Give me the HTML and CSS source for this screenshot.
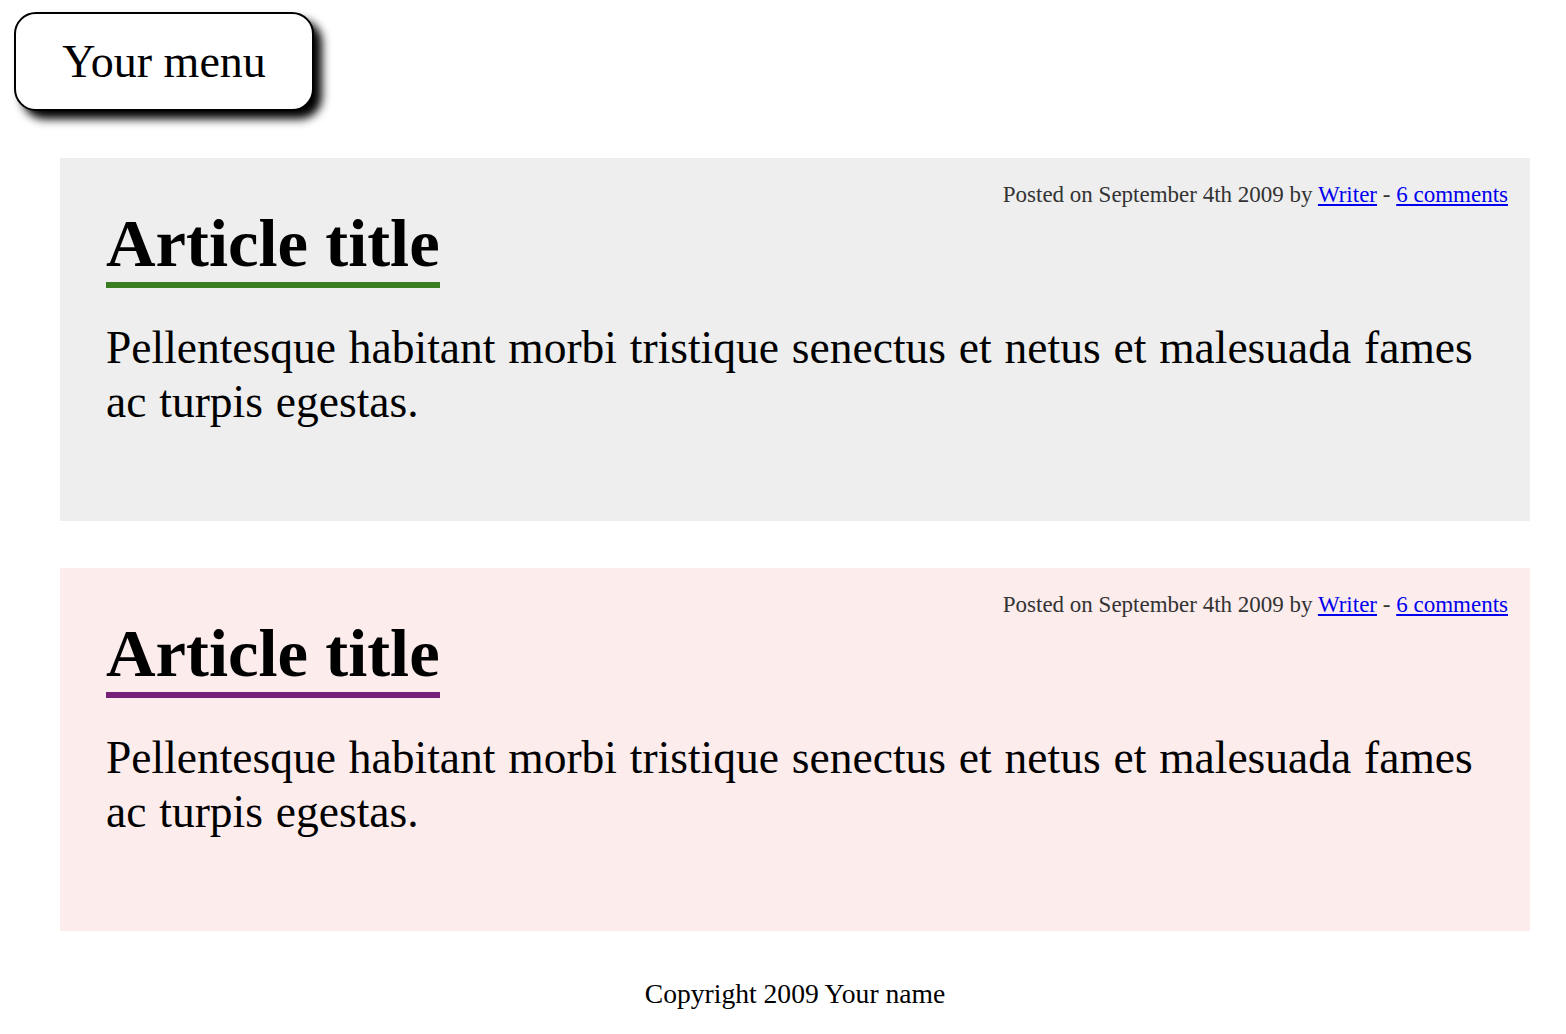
FILE: index.html
```html
<!DOCTYPE html>
<html>
<head>
<meta charset="utf-8">
<title>Articles</title>
<link rel="stylesheet" href="styles.css">
</head>
<body>
<nav class="menu">Your menu</nav>
<main class="articles">
  <article class="article article-grey">
    <div class="meta">Posted on September 4th 2009 by <a href="#">Writer</a> - <a href="#">6 comments</a></div>
    <h1 class="title title-green">Article title</h1>
    <p class="text">Pellentesque habitant morbi tristique senectus et netus et malesuada fames ac turpis egestas.</p>
  </article>
  <article class="article article-pink">
    <div class="meta">Posted on September 4th 2009 by <a href="#">Writer</a> - <a href="#">6 comments</a></div>
    <h1 class="title title-purple">Article title</h1>
    <p class="text">Pellentesque habitant morbi tristique senectus et netus et malesuada fames ac turpis egestas.</p>
  </article>
</main>
<footer class="footer">Copyright 2009 Your name</footer>
</body>
</html>
```
FILE: styles.css
```css
html, body {
  margin: 0;
  padding: 0;
  background: #fff;
}
body {
  font-family: "Liberation Serif", "Times New Roman", serif;
  color: #000;
  padding: 12px 36px 0 14px;
}
.menu {
  width: 296px;
  height: 95px;
  box-sizing: content-box;
  border: 2px solid #000;
  border-radius: 22px;
  box-shadow: 8px 8px 10px #000;
  display: flex;
  align-items: center;
  justify-content: center;
  font-size: 46px;
  background: #fff;
}
.articles {
  display: flex;
  flex-direction: column;
  gap: 47px;
  margin: 47px 0 0 46px;
}
.article {
  height: 363px;
  box-sizing: border-box;
  padding: 24px 22px 0 46px;
}
.article-grey { background: #eeeeee; }
.article-pink { background: #fcecec; }
.meta {
  text-align: right;
  font-size: 23px;
  color: #333;
  line-height: 26px;
}
.meta a { color: #0000ee; }
.title {
  display: inline-block;
  margin: 0;
  font-size: 68.7px;
  font-weight: bold;
  line-height: 70px;
  padding-bottom: 4px;
  border-bottom: 6px solid;
}
.title-green { border-color: #3a7d22; }
.title-purple { border-color: #77207a; }
.text {
  margin: 33px 24px 0 0;
  font-size: 45.5px;
  word-spacing: 1.5px;
  line-height: 54px;
}
.footer {
  text-align: center;
  font-size: 27.6px;
  margin: 47px 0 0 46px;
  padding-bottom: 20px;
}
```
